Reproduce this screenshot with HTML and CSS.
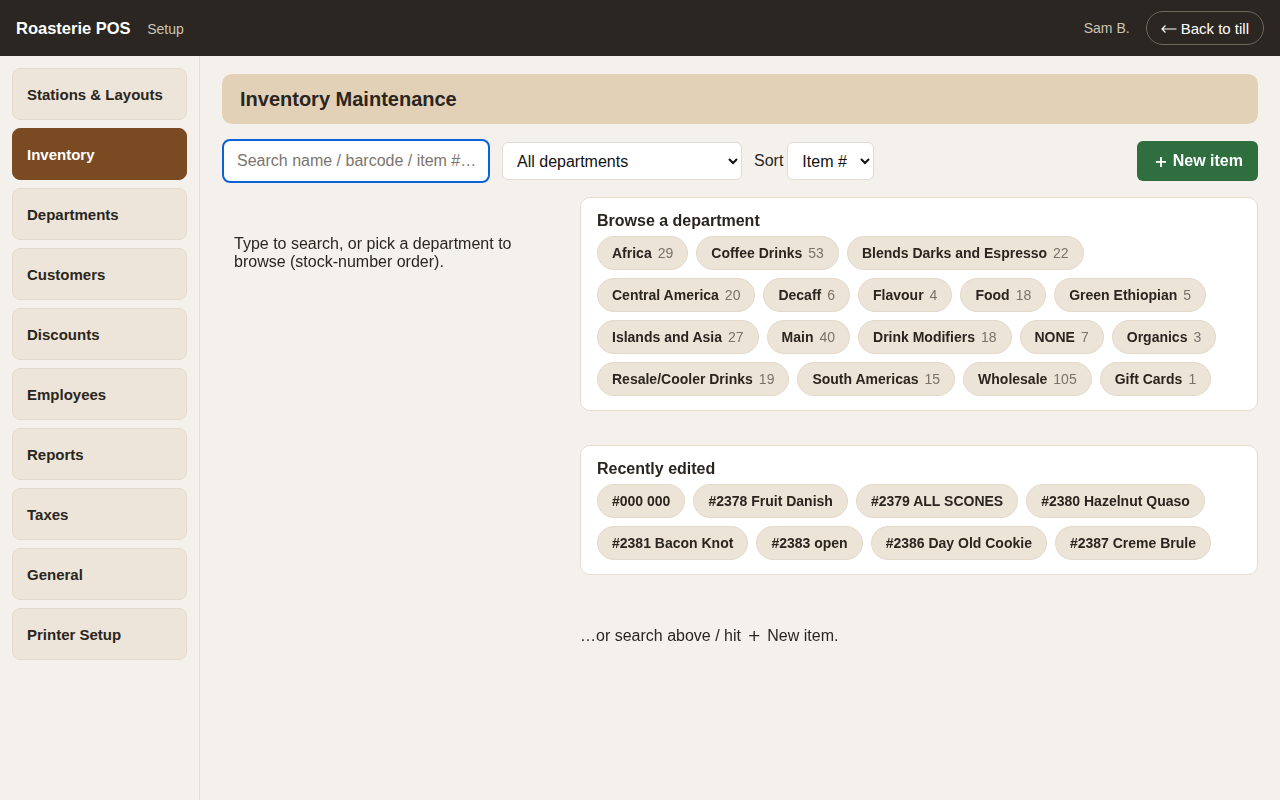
FILE: index.html
```html
<!DOCTYPE html>
<html>
<head>
    <title>Roasterie POS - Setup</title>
    <link rel="stylesheet" href="styles.css">
</head>
<body>
    <header class="topbar">
        <div class="brand">Roasterie POS <span class="brand-sub">Setup</span></div>
        <div class="topbar-right">
            <span class="user">Sam B.</span>
            <button class="back-btn">
                <svg class="arrow" width="16" height="10" viewBox="0 0 16 10"><path d="M15.5 5H1M4.5 1.5L1 5l3.5 3.5" fill="none" stroke="#fff" stroke-width="1.2"/></svg>
                Back to till
            </button>
        </div>
    </header>

    <div class="layout">
        <nav class="sidebar">
            <a class="nav-item">Stations &amp; Layouts</a>
            <a class="nav-item active">Inventory</a>
            <a class="nav-item">Departments</a>
            <a class="nav-item">Customers</a>
            <a class="nav-item">Discounts</a>
            <a class="nav-item">Employees</a>
            <a class="nav-item">Reports</a>
            <a class="nav-item">Taxes</a>
            <a class="nav-item">General</a>
            <a class="nav-item">Printer Setup</a>
        </nav>

        <main class="main">
            <div class="page-title">Inventory Maintenance</div>

            <div class="toolbar">
                <input type="text" class="search" placeholder="Search name / barcode / item #…" autofocus>
                <select class="dept-select">
                    <option>All departments</option>
                </select>
                <label class="sort-label">Sort</label>
                <select class="sort-select">
                    <option>Item #</option>
                </select>
                <button class="new-btn"><span class="plus">+</span> New item</button>
            </div>

            <div class="content">
                <div class="hint">Type to search, or pick a department to browse (stock-number order).</div>

                <div class="right-col">
                    <div class="card">
                        <h3>Browse a department</h3>
                        <div class="chips">
                            <span class="chip">Africa <em>29</em></span>
                            <span class="chip">Coffee Drinks <em>53</em></span>
                            <span class="chip">Blends Darks and Espresso <em>22</em></span>
                            <span class="chip">Central America <em>20</em></span>
                            <span class="chip">Decaff <em>6</em></span>
                            <span class="chip">Flavour <em>4</em></span>
                            <span class="chip">Food <em>18</em></span>
                            <span class="chip">Green Ethiopian <em>5</em></span>
                            <span class="chip">Islands and Asia <em>27</em></span>
                            <span class="chip">Main <em>40</em></span>
                            <span class="chip">Drink Modifiers <em>18</em></span>
                            <span class="chip">NONE <em>7</em></span>
                            <span class="chip">Organics <em>3</em></span>
                            <span class="chip">Resale/Cooler Drinks <em>19</em></span>
                            <span class="chip">South Americas <em>15</em></span>
                            <span class="chip">Wholesale <em>105</em></span>
                            <span class="chip">Gift Cards <em>1</em></span>
                        </div>
                    </div>

                    <div class="card recent">
                        <h3>Recently edited</h3>
                        <div class="chips">
                            <span class="chip">#000 000</span>
                            <span class="chip">#2378 Fruit Danish</span>
                            <span class="chip">#2379 ALL SCONES</span>
                            <span class="chip">#2380 Hazelnut Quaso</span>
                            <span class="chip">#2381 Bacon Knot</span>
                            <span class="chip">#2383 open</span>
                            <span class="chip">#2386 Day Old Cookie</span>
                            <span class="chip">#2387 Creme Brule</span>
                        </div>
                    </div>

                    <p class="footnote">…or search above / hit <span class="plus">+</span> New item.</p>
                </div>
            </div>
        </main>
    </div>
</body>
</html>
```

FILE: styles.css
```css
* { box-sizing: border-box; }
body { margin: 0; font-family: "Liberation Sans", Arial, sans-serif; color: #2b2520; background: #f4f1ec; }

.topbar { height: 56px; background: #2b2621; display: flex; align-items: center; justify-content: space-between; padding: 0 16px; }
.brand { color: #fff; font-weight: bold; font-size: 16.5px; }
.brand-sub { color: #cdc4b8; font-weight: normal; font-size: 14px; margin-left: 12px; }
.topbar-right { display: flex; align-items: center; gap: 16px; }
.user { color: #cdc4b8; font-size: 14px; }
.back-btn { font-family: inherit; font-size: 15px; color: #fff; background: transparent; border: 1px solid #6f665c; border-radius: 17px; height: 34px; padding: 0 14px; display: inline-flex; align-items: center; gap: 4px; }
.back-btn .arrow { margin-top: 2px; }

.layout { display: flex; min-height: 744px; }
.sidebar { width: 200px; border-right: 1px solid #e4ddd2; padding: 12px 12px; display: flex; flex-direction: column; gap: 8px; }
.nav-item { display: flex; align-items: center; width: 175px; height: 52px; padding: 0 14px; background: #ede5d9; border: 1px solid #e4dacb; border-radius: 8px; font-size: 15px; font-weight: bold; color: #2b2520; }
.nav-item.active { background: #7a4b22; border-color: #7a4b22; color: #fff; }

.main { flex: 1; padding: 18px 22px; }
.page-title { height: 50px; background: #e3d1b7; border-radius: 10px; padding: 0 18px; display: flex; align-items: center; font-size: 20px; font-weight: bold; }

.toolbar { display: flex; align-items: center; margin-top: 15px; height: 44px; }
.search { width: 268px; height: 44px; border: 2px solid #0b62d6; border-radius: 8px; padding: 0 13px; font-family: inherit; font-size: 16px; outline: none; background: #fff; }
.search::placeholder { color: #7b756e; }
select { font-family: inherit; font-size: 16px; color: #111; background: #fff; border: 1px solid #e2dbd0; border-radius: 6px; height: 38px; padding: 0 10px; }
.dept-select { width: 240px; margin-left: 12px; }
.sort-label { font-size: 16px; margin: 0 4px 0 12px; }
.sort-select { width: 87px; }
.new-btn { margin-left: auto; height: 40px; padding: 0 15px 0 17px; background: #2e6e3f; color: #fff; border: none; border-radius: 6px; font-family: inherit; font-size: 16px; font-weight: bold; display: inline-flex; align-items: center; }
.new-btn .plus { font-family: "DejaVu Sans", sans-serif; font-size: 16px; margin-right: 5px; }

.content { display: grid; grid-template-columns: 346px 1fr; gap: 12px; margin-top: 14px; }
.hint { padding: 38px 12px; font-size: 16px; line-height: 18px; }

.card { background: #fff; border: 1px solid #e6ddd0; border-radius: 10px; padding: 13px 16px 14px; }
.card h3 { margin: 0 0 5px; font-size: 16px; line-height: 20px; }
.card.recent { margin-top: 34px; }
.chips { display: flex; flex-wrap: wrap; gap: 8px; }
.chip { height: 34px; display: inline-flex; align-items: center; padding: 0 14px; background: #ede4d8; border: 1px solid #e3d9ca; border-radius: 17px; font-size: 14px; font-weight: bold; color: #2b2520; }
.chip em { font-style: normal; font-weight: normal; color: #7a7169; margin-left: 6px; }

.footnote { margin: 51px 0 0; font-size: 16px; }
.footnote .plus { font-family: "DejaVu Sans", sans-serif; font-size: 16px; margin: 0 2px; }
```
